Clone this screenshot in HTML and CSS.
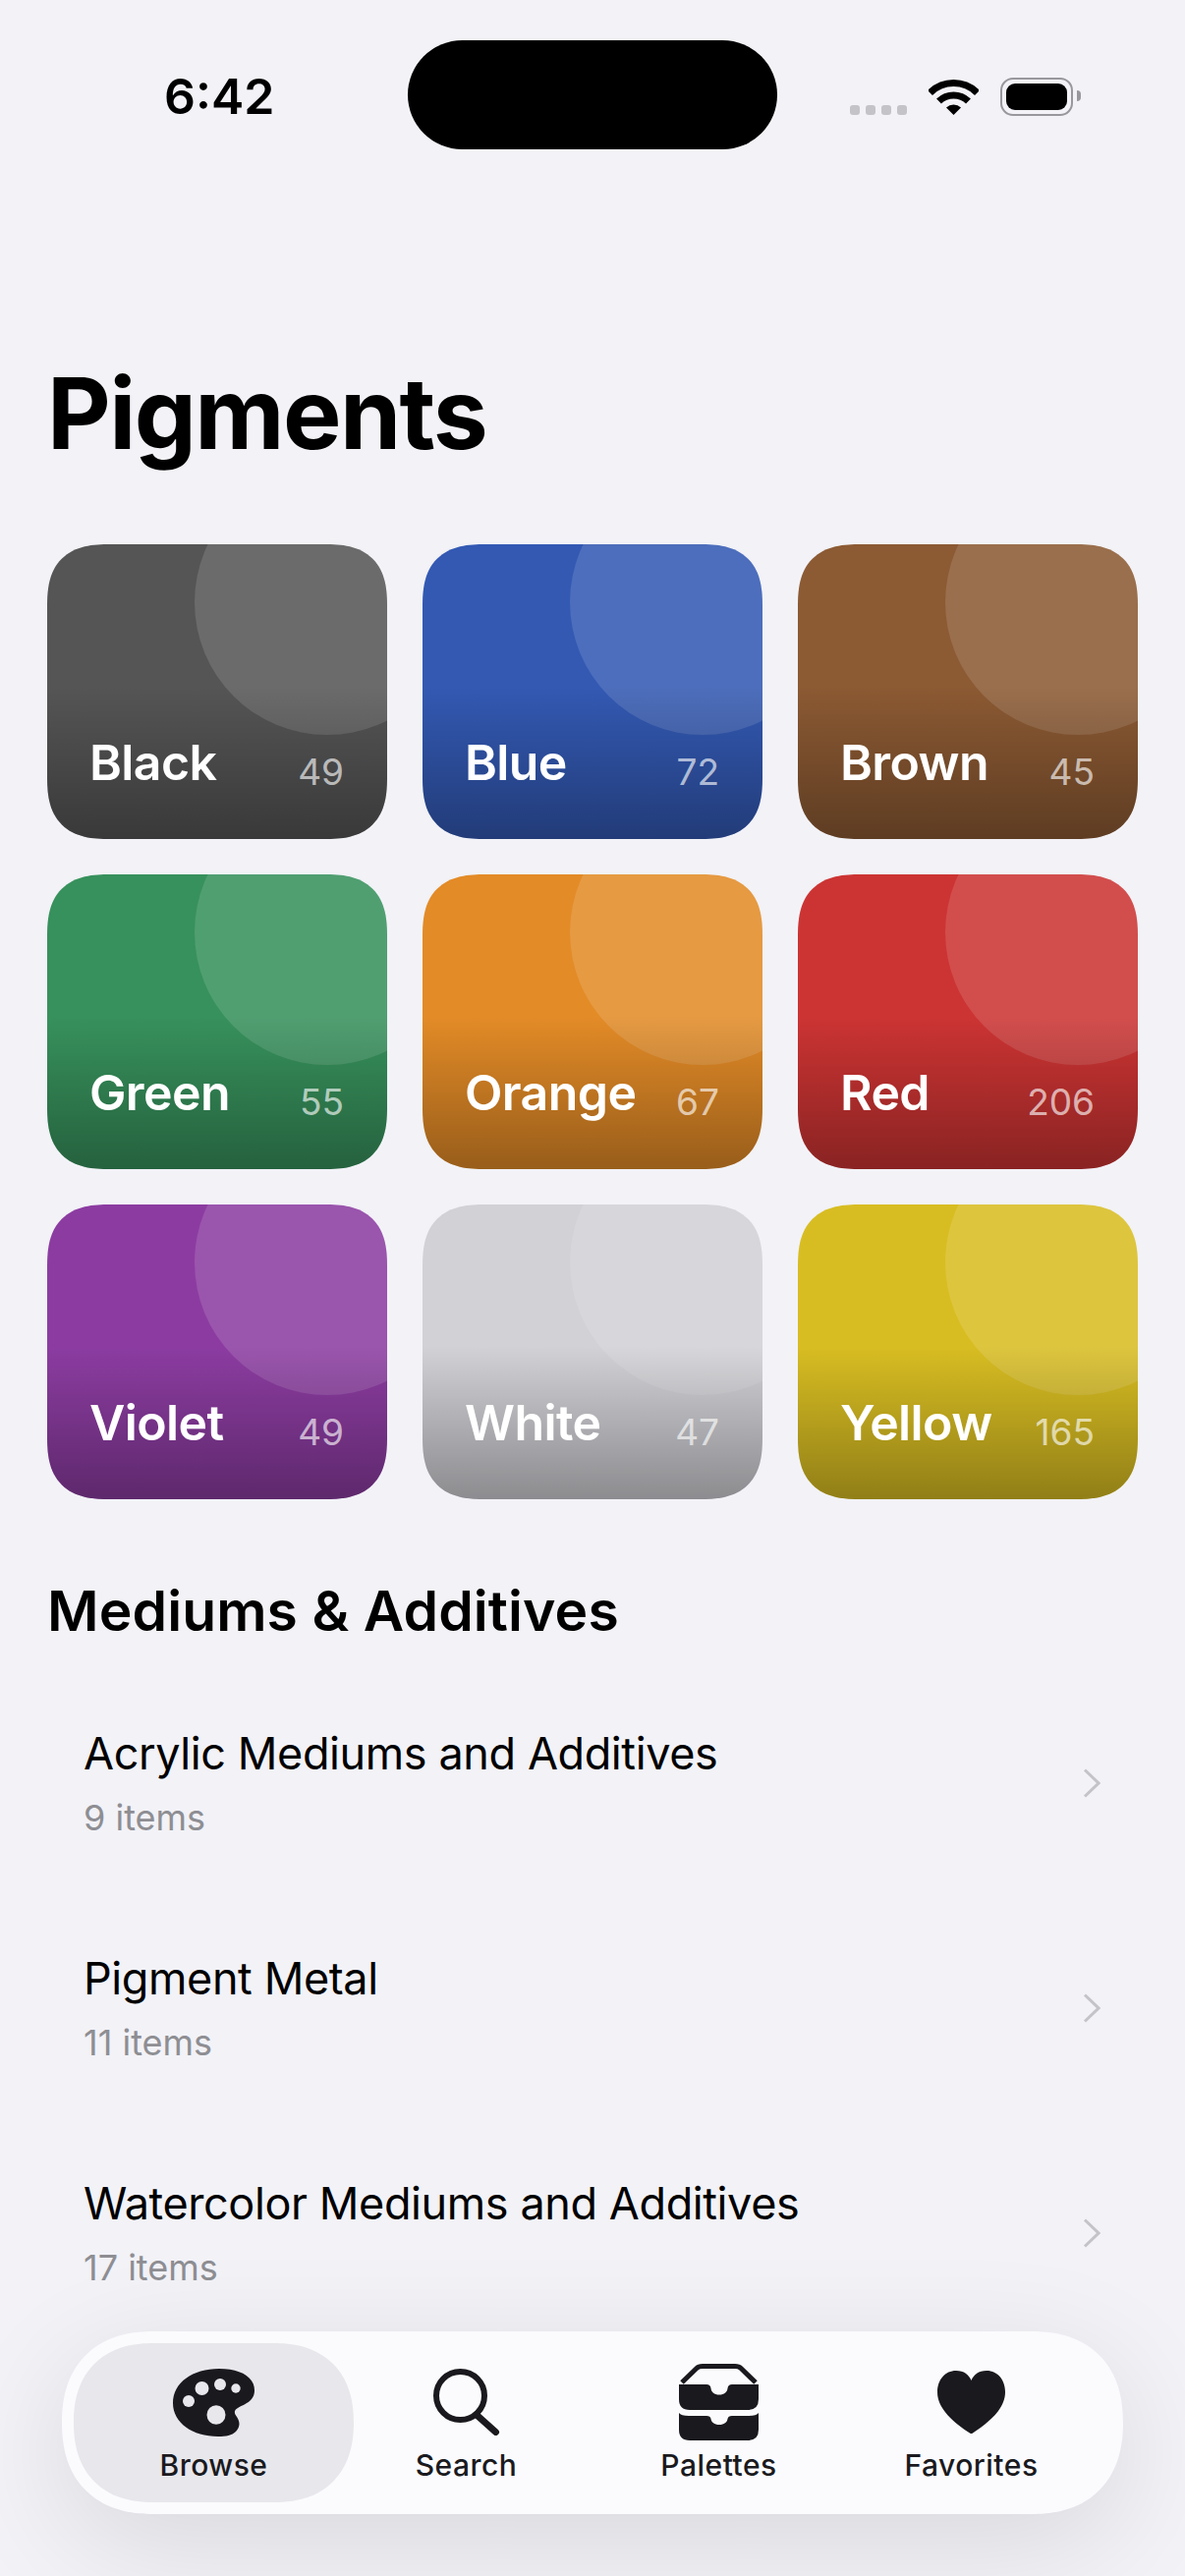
FILE: index.html
```html
<!DOCTYPE html>
<html lang="en">
<head>
    <meta charset="UTF-8">
    <meta name="viewport" content="width=device-width, initial-scale=1.0">
    <title>Pigments</title>
    <link rel="stylesheet" href="styles.css">
</head>
<body>
    <div class="status-bar">
        <div class="status-time">6:42</div>
        <div class="island"></div>
        <div class="status-icons">
            <div class="signal"><span></span><span></span><span></span><span></span></div>
            <svg class="wifi" width="51" height="37" viewBox="0 0 51 37">
                <path d="M1.5 14.5A34 34 0 0 1 49.5 14.5" fill="none" stroke="#000" stroke-width="7"/>
                <path d="M10.5 23A21.5 21.5 0 0 1 40.5 23" fill="none" stroke="#000" stroke-width="7"/>
                <path d="M25.5 37L18 29.5A11 11 0 0 1 33 29.5Z" fill="#000"/>
            </svg>
            <div class="battery"><div class="battery-fill"></div></div>
            <div class="battery-nub"></div>
        </div>
    </div>

    <h1 class="page-title">Pigments</h1>

    <div class="pigment-grid">
        <div class="pigment-card black"><span class="pigment-name">Black</span><span class="pigment-count">49</span></div>
        <div class="pigment-card blue"><span class="pigment-name">Blue</span><span class="pigment-count">72</span></div>
        <div class="pigment-card brown"><span class="pigment-name">Brown</span><span class="pigment-count">45</span></div>
        <div class="pigment-card green"><span class="pigment-name">Green</span><span class="pigment-count">55</span></div>
        <div class="pigment-card orange"><span class="pigment-name">Orange</span><span class="pigment-count">67</span></div>
        <div class="pigment-card red"><span class="pigment-name">Red</span><span class="pigment-count">206</span></div>
        <div class="pigment-card violet"><span class="pigment-name">Violet</span><span class="pigment-count">49</span></div>
        <div class="pigment-card white"><span class="pigment-name">White</span><span class="pigment-count">47</span></div>
        <div class="pigment-card yellow"><span class="pigment-name">Yellow</span><span class="pigment-count">165</span></div>
    </div>

    <h2 class="section-title">Mediums &amp; Additives</h2>

    <div class="medium-list">
        <div class="medium-row">
            <div class="medium-text">
                <div class="medium-name">Acrylic Mediums and Additives</div>
                <div class="medium-count">9 items</div>
            </div>
            <svg class="chevron" width="18" height="30" viewBox="0 0 18 30"><path d="M2 1.5L16 15L2 28.5"/></svg>
        </div>
        <div class="medium-row">
            <div class="medium-text">
                <div class="medium-name">Pigment Metal</div>
                <div class="medium-count">11 items</div>
            </div>
            <svg class="chevron" width="18" height="30" viewBox="0 0 18 30"><path d="M2 1.5L16 15L2 28.5"/></svg>
        </div>
        <div class="medium-row">
            <div class="medium-text">
                <div class="medium-name">Watercolor Mediums and Additives</div>
                <div class="medium-count">17 items</div>
            </div>
            <svg class="chevron" width="18" height="30" viewBox="0 0 18 30"><path d="M2 1.5L16 15L2 28.5"/></svg>
        </div>
    </div>

    <nav class="tab-bar">
        <div class="tab tab-active">
            <div class="tab-icon">
                <svg width="83" height="69" viewBox="0 0 83 69">
                    <path fill="#1a1a1e" d="M47 0C68 0 83 8 83 22C83 34 72 36 66 40C61 43 63 46 65 49C68 54 69 58 64 64C60 68 54 69 46 69C20 69 0 55 0 35C0 14 20 0 47 0Z"/>
                    <g fill="#e8e8ec">
                        <circle cx="29.5" cy="20" r="7"/>
                        <circle cx="48" cy="16" r="6"/>
                        <circle cx="64" cy="20" r="4.7"/>
                        <circle cx="16" cy="33" r="6"/>
                        <ellipse cx="44" cy="47" rx="9.5" ry="9.8"/>
                    </g>
                </svg>
            </div>
            <span>Browse</span>
        </div>
        <div class="tab">
            <div class="tab-icon">
                <svg width="68" height="68" viewBox="0 0 68 68">
                    <circle cx="27.5" cy="27.5" r="24.5" fill="none" stroke="#1a1a1e" stroke-width="6"/>
                    <path d="M44 47L63.5 64.5" fill="none" stroke="#1a1a1e" stroke-width="7" stroke-linecap="round"/>
                </svg>
            </div>
            <span>Search</span>
        </div>
        <div class="tab">
            <div class="tab-icon">
                <svg width="81" height="78" viewBox="0 0 81 78">
                    <path d="M3 19L18 4.5Q20 2.5 24 2.5H57Q61 2.5 63 4.5L78 19" fill="none" stroke="#1a1a1e" stroke-width="5"/>
                    <path fill="#1a1a1e" d="M0 21H28Q32 21 32.5 25C33 29 36 31.5 41 31.5C46 31.5 49 29 49.5 25Q50 21 54 21H81V36Q81 47 70 47H11Q0 47 0 36Z"/>
                    <path fill="#1a1a1e" d="M0 50Q2 53 10 53H28Q32 53 32.5 56C33 59.5 36 62 41 62C46 62 49 59.5 49.5 56Q50 53 54 53H71Q79 53 81 50V67Q81 78 70 78H11Q0 78 0 67Z"/>
                </svg>
            </div>
            <span>Palettes</span>
        </div>
        <div class="tab">
            <div class="tab-icon">
                <svg width="69" height="64" viewBox="0 0 69 64">
                    <path fill="#1a1a1e" d="M34.5 10C37 4 42 0 50 0C61 0 69 9 69 22C69 39 52 53 36 63.5Q34.5 64.5 33 63.5C17 53 0 39 0 22C0 9 8 0 19 0C27 0 32 4 34.5 10Z"/>
                </svg>
            </div>
            <span>Favorites</span>
        </div>
    </nav>
</body>
</html>
```

FILE: styles.css
```css
* {
    box-sizing: border-box;
}
body {
    position: relative;
    width: 1206px;
    height: 2622px;
    margin: 0;
    overflow: hidden;
    font-family: Inter, "Liberation Sans", sans-serif;
    background-color: #f2f2f7;
    color: #000;
}

/* status bar */
.status-bar {
    display: grid;
    grid-template-columns: 415px 376px 1fr;
    height: 152px;
    padding-top: 41px;
}
.status-time {
    padding-left: 167px;
    padding-top: 30px;
    font-size: 50px;
    line-height: 54px;
    font-weight: 600;
}
.island {
    height: 111px;
    background-color: #000;
    border-radius: 56px;
}
.status-icons {
    display: flex;
    align-items: flex-end;
    height: 76px;
    padding-left: 74px;
}
.signal {
    display: flex;
    gap: 6px;
    margin-right: 22px;
}
.signal span {
    width: 10px;
    height: 10px;
    background-color: #c4c4c8;
    border-radius: 3px;
}
.battery {
    width: 74px;
    height: 39px;
    margin-left: 22px;
    margin-bottom: -1px;
    padding: 4px;
    border: 2px solid #98989c;
    border-radius: 13px;
}
.battery-fill {
    width: 100%;
    height: 100%;
    background-color: #000;
    border-radius: 9px;
}
.battery-nub {
    width: 4px;
    height: 11px;
    margin-left: 4px;
    margin-bottom: 14px;
    background-color: #98989c;
    border-radius: 0 6px 6px 0;
}

/* headings */
.page-title {
    margin: 0;
    padding: 209px 0 0 48px;
    font-size: 100px;
    line-height: 120px;
    font-weight: 700;
    letter-spacing: -1.6px;
}
.section-title {
    margin: 0;
    padding: 79px 0 0 48px;
    font-size: 57px;
    line-height: 70px;
    font-weight: 580;
    letter-spacing: 0.1px;
}

/* pigment cards */
.pigment-grid {
    display: grid;
    grid-template-columns: repeat(3, 346px);
    grid-auto-rows: 300px;
    gap: 36px;
    padding: 0 48px;
    margin-top: 73px;
}
.pigment-card {
    position: relative;
    display: flex;
    align-items: flex-end;
    justify-content: space-between;
    padding: 0 44px 48px 43px;
    overflow: hidden;
    border-radius: 64px;
    corner-shape: superellipse(1.4);
    color: #fff;
}
.pigment-card::before {
    content: "";
    position: absolute;
    left: 150px;
    top: -76px;
    width: 270px;
    height: 270px;
    border-radius: 50%;
    background-color: rgba(255, 255, 255, 0.13);
}
.pigment-card::after {
    content: "";
    position: absolute;
    inset: 0;
    background: linear-gradient(180deg, rgba(0, 0, 0, 0) 48%, rgba(0, 0, 0, 0.33) 100%);
}
.pigment-name,
.pigment-count {
    position: relative;
    z-index: 1;
}
.pigment-name {
    font-size: 50px;
    line-height: 60px;
    font-weight: 580;
    letter-spacing: -0.6px;
}
.pigment-count {
    font-size: 37px;
    line-height: 40px;
    color: rgba(255, 255, 255, 0.65);
}
.black { background-color: #555556; }
.blue { background-color: #3359b3; }
.brown { background-color: #8c5a33; }
.green { background-color: #37915c; }
.orange { background-color: #e38b27; }
.red { background-color: #cc3433; }
.violet { background-color: #8c3ca1; }
.white { background-color: #d1d1d6; }
.yellow { background-color: #d8bd22; }

/* list */
.medium-list {
    margin-top: 25px;
}
.medium-row {
    display: flex;
    align-items: center;
    justify-content: space-between;
    height: 229px;
    padding: 0 86px 0 85px;
}
.medium-name {
    font-size: 45px;
    line-height: 56px;
    letter-spacing: -0.4px;
}
.medium-count {
    margin-top: 15px;
    font-size: 36px;
    line-height: 44px;
    color: #8e8e93;
}
.chevron {
    fill: none;
    stroke: #c4c4c8;
    stroke-width: 3;
}

/* tab bar, floats over the list */
.tab-bar {
    position: absolute;
    left: 63px;
    top: 2373px;
    display: flex;
    width: 1080px;
    height: 186px;
    padding: 12px;
    background-color: #fbfbfe;
    border-radius: 93px;
    corner-shape: superellipse(1.2);
    box-shadow: 0 30px 120px rgba(0, 0, 0, 0.11);
}
.tab {
    display: flex;
    flex-direction: column;
    align-items: center;
    width: 257px;
    color: #1a1a1e;
    font-size: 30px;
    font-weight: 500;
    letter-spacing: 0.5px;
}
.tab-active {
    width: 285px;
    margin-right: -14px;
    background-color: #e8e8ec;
    border-radius: 81px;
    corner-shape: superellipse(1.2);
}
.tab-icon {
    display: flex;
    align-items: center;
    justify-content: center;
    height: 78px;
    margin-top: 21px;
    margin-bottom: 7px;
}
```
